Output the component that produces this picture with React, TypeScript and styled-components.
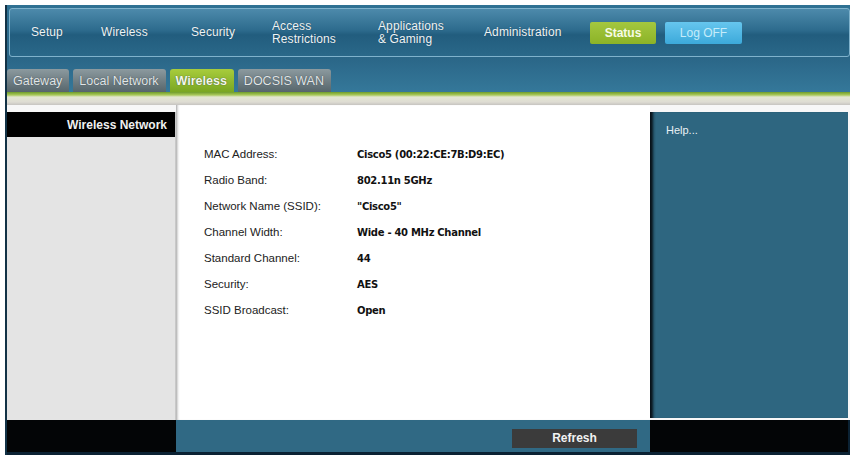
import { Fragment } from "react";
import styled, { createGlobalStyle } from "styled-components";

const GlobalStyle = createGlobalStyle`
  html, body {
    margin: 0;
    padding: 0;
    background: #ffffff;
    font-family: "Liberation Sans", Arial, sans-serif;
  }
`;

const Frame = styled.div`
  margin: 5px 2px 0 5px;
  width: 843px;
  display: flex;
  flex-direction: column;
  background: #0b2233;
  border-left: 2px solid #123246;
`;

const Header = styled.header`
  background: linear-gradient(#2f7193, #2a6687 60%, #35789a);
  padding: 3px 0 0 2px;
`;

const NavBox = styled.nav`
  height: 47px;
  border: 1px solid #7fb2cc;
  border-radius: 3px;
  background: linear-gradient(#4d8aab, #2d6b8d 45%, #225d7e 55%, #2a6889);
  display: flex;
  align-items: center;
  padding-left: 21px;
`;

const NavItem = styled.div<{ w: number }>`
  width: ${(p) => p.w}px;
  color: #eef4f7;
  font-size: 12px;
  line-height: 13px;
  letter-spacing: 0.1px;
  text-shadow: 0 0 1px #1a3d52;
`;

const NavButton = styled.div<{ kind: "status" | "logoff" }>`
  height: 22px;
  margin-right: 9px;
  padding: 0 14px;
  display: flex;
  align-items: center;
  justify-content: center;
  border-radius: 2px;
  font-size: 12px;
  font-weight: ${(p) => (p.kind === "status" ? 700 : 400)};
  color: ${(p) => (p.kind === "status" ? "#f6fbe6" : "#c5ecfa")};
  background: ${(p) =>
    p.kind === "status"
      ? "linear-gradient(#a4c73f, #8cb327)"
      : "linear-gradient(#66c6ee, #3ca9da)"};
  min-width: ${(p) => (p.kind === "status" ? 38 : 49)}px;
`;

const Tabs = styled.div`
  display: flex;
  gap: 4px;
  margin-left: -2px;
  padding-top: 12px;
  height: 23px;
  align-items: flex-end;
`;

const Tab = styled.div<{ active?: boolean }>`
  height: 23px;
  padding: 0 7px 0 6px;
  display: flex;
  align-items: center;
  border-radius: 3px 3px 0 0;
  font-size: 12.5px;
  color: ${(p) => (p.active ? "#f4f9e8" : "#e2e6e8")};
  font-weight: ${(p) => (p.active ? 700 : 400)};
  background: ${(p) =>
    p.active
      ? "linear-gradient(#a8cc3c, #79a622)"
      : "linear-gradient(#8c9a9f, #56656b)"};
  text-shadow: 0 0 1px #2d3a40;
`;

const Strip = styled.div`
  height: 13px;
  background: linear-gradient(
    #6f9c2a 0,
    #a9c95a 3px,
    #e3e6d2 5px,
    #dedcd3 10px,
    #c6c4c0 13px
  );
`;

const Body = styled.div`
  display: grid;
  grid-template-columns: 169px 474px 198px;
  height: 315px;
  background: #f7f7f7;
`;

const Side = styled.aside`
  margin-top: 7px;
  background: #e4e4e4;
  border-right: 1px solid #c8c8c8;
  display: flex;
  flex-direction: column;
`;

const SideTitle = styled.div`
  height: 25px;
  background: #000;
  color: #f0f0f0;
  font-weight: 700;
  font-size: 12px;
  display: flex;
  align-items: center;
  justify-content: flex-end;
  padding-right: 8px;
`;

const Content = styled.main`
  background: #fff;
  box-shadow: inset 3px 0 3px -2px #9a9a9a;
  padding: 43px 0 0 28px;
  display: grid;
  grid-template-columns: 153px 1fr;
  grid-auto-rows: min-content;
  row-gap: 13px;
`;

const Label = styled.div`
  color: #222;
  font-size: 11.5px;
  line-height: 13px;
`;

const Value = styled.div`
  color: #111;
  font-family: "DejaVu Sans", Verdana, sans-serif;
  font-size: 10px;
  font-weight: 700;
  letter-spacing: -0.3px;
  line-height: 13px;
`;

const Help = styled.aside`
  margin-top: 7px;
  margin-bottom: 2px;
  background: #2e6680;
  box-shadow: inset 5px 0 3px -2px #071016;
  color: #e8f0f4;
  font-size: 11px;
  padding: 12px 0 0 16px;
`;

const Footer = styled.footer`
  display: grid;
  grid-template-columns: 169px 474px 198px;
  height: 32px;
  border-bottom: 3px solid #0b2233;
`;

const FootDark = styled.div`
  background: #030506;
`;

const FootBar = styled.div`
  background: #306984;
  display: flex;
  justify-content: flex-end;
  align-items: center;
  padding: 4px 13px 0 0;
`;

const RefreshButton = styled.button`
  width: 125px;
  height: 19px;
  border: none;
  background: #3b3b3b;
  color: #f2f2f2;
  font-family: "Liberation Sans", Arial, sans-serif;
  font-weight: 700;
  font-size: 12px;
  padding: 0;
`;

const navItems: { label: string[]; w: number }[] = [
  { label: ["Setup"], w: 70 },
  { label: ["Wireless"], w: 90 },
  { label: ["Security"], w: 81 },
  { label: ["Access", "Restrictions"], w: 106 },
  { label: ["Applications", "& Gaming"], w: 106 },
  { label: ["Administration"], w: 106 },
];

const rows: [string, string][] = [
  ["MAC Address:", "Cisco5 (00:22:CE:7B:D9:EC)"],
  ["Radio Band:", "802.11n 5GHz"],
  ["Network Name (SSID):", "\"Cisco5\""],
  ["Channel Width:", "Wide - 40 MHz Channel"],
  ["Standard Channel:", "44"],
  ["Security:", "AES"],
  ["SSID Broadcast:", "Open"],
];

function App() {
  return (
    <>
      <GlobalStyle />
      <Frame>
        <Header>
          <NavBox>
            {navItems.map((item) => (
              <NavItem key={item.label.join(" ")} w={item.w}>
                {item.label.map((line) => (
                  <div key={line}>{line}</div>
                ))}
              </NavItem>
            ))}
            <NavButton kind="status">Status</NavButton>
            <NavButton kind="logoff">Log OFF</NavButton>
          </NavBox>
          <Tabs>
            <Tab>Gateway</Tab>
            <Tab>Local Network</Tab>
            <Tab active>Wireless</Tab>
            <Tab>DOCSIS WAN</Tab>
          </Tabs>
        </Header>
        <Strip />
        <Body>
          <Side>
            <SideTitle>Wireless Network</SideTitle>
          </Side>
          <Content>
            {rows.map(([label, value]) => (
              <Fragment key={label}>
                <Label>{label}</Label>
                <Value>{value}</Value>
              </Fragment>
            ))}
          </Content>
          <Help>Help...</Help>
        </Body>
        <Footer>
          <FootDark />
          <FootBar>
            <RefreshButton>Refresh</RefreshButton>
          </FootBar>
          <FootDark />
        </Footer>
      </Frame>
    </>
  );
}

export default App;
